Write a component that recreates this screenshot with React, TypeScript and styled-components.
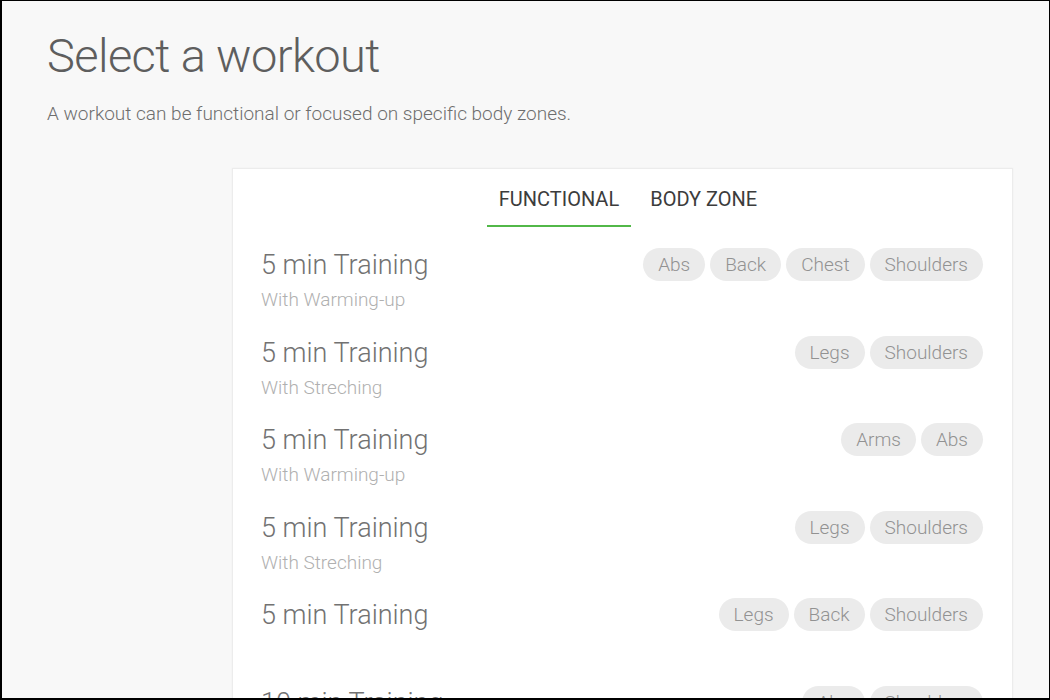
import React from "react";
import styled, {createGlobalStyle} from "styled-components";

const GlobalStyle = createGlobalStyle`
  html, body {
    margin: 0;
    padding: 0;
    background: #000;
  }
  body {
    font-family: Roboto, "Liberation Sans", sans-serif;
  }
`;

const Frame = styled.div`
  box-sizing: border-box;
  width: 1050px;
  height: 700px;
  overflow: hidden;
  border-top: 1px solid #000;
  border-left: 2px solid #000;
  border-right: 1px solid #000;
  border-bottom: 2px solid #000;
  background: #f8f8f8;
  padding: 0 0 0 45px;
`;

const Title = styled.h1`
  margin: 25px 0 0;
  font-size: 47px;
  font-weight: 300;
  line-height: 60px;
  color: #5e5e5e;
  letter-spacing: -0.6px;
`;

const Subtitle = styled.p`
  margin: 16px 0 0;
  font-size: 19px;
  font-weight: 300;
  line-height: 24px;
  color: #6e6e6e;
`;

const Card = styled.div`
  margin: 42px 0 0 185px;
  width: 781px;
  background: #fff;
  border: 1px solid #ececec;
  border-bottom: none;
  box-shadow: 0 0 2px rgba(0, 0, 0, 0.04);
  padding: 0 29px 0 28px;
  box-sizing: border-box;
  min-height: 600px;
`;

const Tabs = styled.div`
  display: flex;
  justify-content: center;
  gap: 7px;
  padding-left: 12px;
`;

const Tab = styled.div<{active?: boolean}>`
  padding: 18px 12px 0;
  height: 58px;
  box-sizing: border-box;
  font-size: 20px;
  font-weight: 400;
  color: #3c3c3c;
  border-bottom: 2px solid ${p => (p.active ? "#52b848" : "transparent")};
`;

const List = styled.div`
  padding-top: 21px;
`;

const Row = styled.div`
  display: flex;
  justify-content: space-between;
  align-items: flex-start;
  height: 87.5px;
`;

const Info = styled.div`
  display: flex;
  flex-direction: column;
`;

const RowTitle = styled.div`
  font-size: 27px;
  font-weight: 300;
  line-height: 34px;
  color: #727272;
`;

const RowSub = styled.div`
  margin-top: 5px;
  font-size: 19px;
  font-weight: 300;
  line-height: 26px;
  color: #b0b0b0;
`;

const Chips = styled.div`
  display: flex;
  gap: 5px;
`;

const Chip = styled.span`
  height: 33px;
  line-height: 33px;
  padding: 0 15px;
  border-radius: 17px;
  background: #ebebeb;
  color: #929292;
  font-size: 19px;
  font-weight: 300;
`;

const workouts = [
    {title: "5 min Training", sub: "With Warming-up", tags: ["Abs", "Back", "Chest", "Shoulders"]},
    {title: "5 min Training", sub: "With Streching", tags: ["Legs", "Shoulders"]},
    {title: "5 min Training", sub: "With Warming-up", tags: ["Arms", "Abs"]},
    {title: "5 min Training", sub: "With Streching", tags: ["Legs", "Shoulders"]},
    {title: "5 min Training", sub: "", tags: ["Legs", "Back", "Shoulders"]},
    {title: "10 min Training", sub: "", tags: ["Abs", "Shoulders"]},
];

const App = () => {
    return (
        <Frame>
            <GlobalStyle/>
            <Title>Select a workout</Title>
            <Subtitle>A workout can be functional or focused on specific body zones.</Subtitle>
            <Card>
                <Tabs>
                    <Tab active>FUNCTIONAL</Tab>
                    <Tab>BODY ZONE</Tab>
                </Tabs>
                <List>
                    {workouts.map((w, i) => (
                        <Row key={i}>
                            <Info>
                                <RowTitle>{w.title}</RowTitle>
                                {w.sub && <RowSub>{w.sub}</RowSub>}
                            </Info>
                            <Chips>
                                {w.tags.map(t => <Chip key={t}>{t}</Chip>)}
                            </Chips>
                        </Row>
                    ))}
                </List>
            </Card>
        </Frame>
    );
};

export default App;
